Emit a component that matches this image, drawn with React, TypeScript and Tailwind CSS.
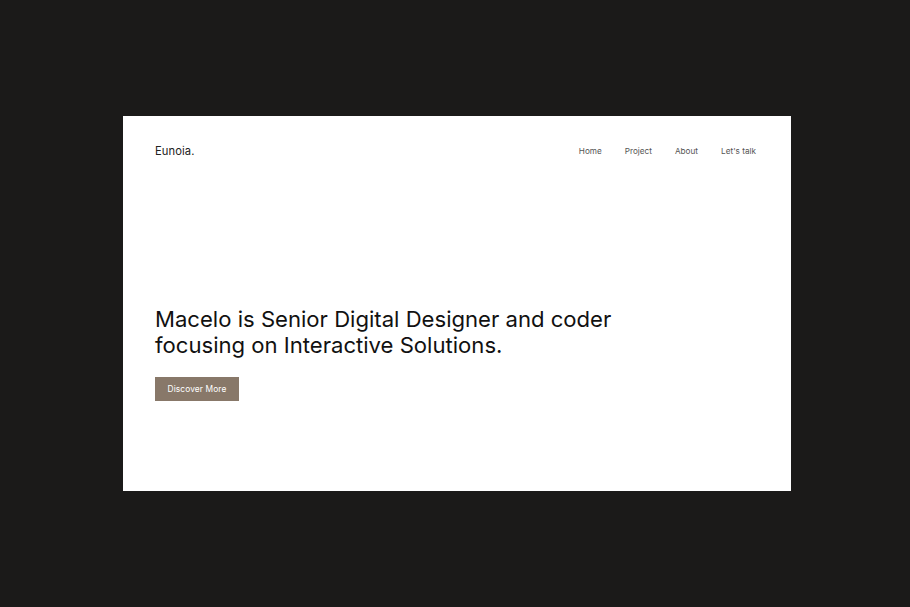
export default function App() {
  return (
    <div className="w-[910px] h-[607px] bg-[#1b1a19] flex items-center justify-center pl-[4px]">
      <div className="w-[668px] h-[375px] bg-white flex flex-col px-[32px] pt-[27px] pb-[90px]">
        <header className="flex items-center justify-between">
          <div className="text-[11.2px] text-[#222] tracking-[0.1px]" style={{ fontFamily: "Inter, sans-serif" }}>
            Eunoia.
          </div>
          <nav className="flex gap-[23px] mr-[3px] text-[8.2px] text-[#555]" style={{ fontFamily: "Inter, sans-serif" }}>
            <span>Home</span>
            <span>Project</span>
            <span>About</span>
            <span>Let's talk</span>
          </nav>
        </header>
        <div className="mt-auto">
          <h1
            className="text-[22.1px] leading-[26px] text-[#111] font-normal"
            style={{ fontFamily: "Inter, sans-serif" }}
          >
            Macelo is Senior Digital Designer and coder
            <br />
            focusing on Interactive Solutions.
          </h1>
          <button
            className="mt-[19px] w-[84px] h-[24px] bg-[#887869] text-white text-[8.4px] tracking-[0.1px]"
            style={{ fontFamily: "Inter, sans-serif" }}
          >
            Discover More
          </button>
        </div>
      </div>
    </div>
  );
}
